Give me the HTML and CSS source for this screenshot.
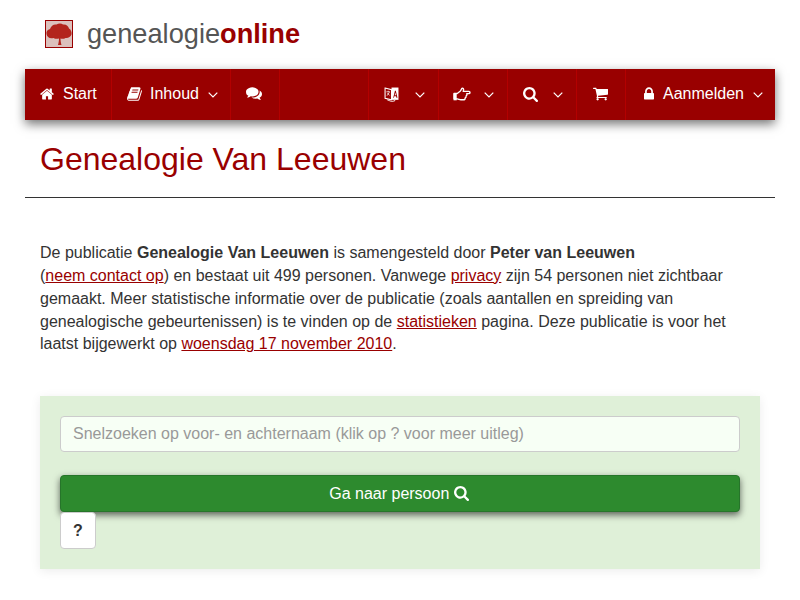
FILE: index.html
```html
<!DOCTYPE html>
<html lang="nl">
<head>
<meta charset="utf-8">
<title>Genealogie Van Leeuwen</title>
<link rel="stylesheet" href="styles.css">
</head>
<body>
<div class="page">
  <header class="brand">
    <span class="brand-mark">
      <svg class="brand-icon" viewBox="0 0 26 26" aria-hidden="true">
        <path d="M.5 13C0 10.500 1.500 8.500 4 8 5 5 7.500 3 10.500 3.500c2-1.500 5-1.500 6.500 0 3-.5 5.500 1.500 6 4 2 1 3 4 2.500 6-1 2.500-3.500 4-6 3.500-1.500 1-3.500 1-5 .5 0 2 .3 4 1 6.500h-3.500c.7-2.500 1-4.500 1-6.500-1.500.5-4 .5-5.500-.5C3.500 18 1 16 .5 13z" fill="#b3241c"/>
      </svg>
    </span>
    <span class="brand-name">genealogie<b>online</b></span>
  </header>
  <nav class="nav">
    <a class="item i-start"><svg class="ic" viewBox="0 0 1664 1792"><path d="M1408 992v480q0 26-19 45t-45 19H960v-384H704v384H320q-26 0-45-19t-19-45V992q0-1 .5-3t.5-3l575-474 575 474q1 2 1 6zm223-69l-62 74q-8 9-21 11h-3q-13 0-21-7L832 424 140 1001q-12 8-24 7-13-2-21-11l-62-74q-8-10-7-23.5T37 878L756 279q32-26 76-26t76 26l244 204V288q0-14 9-23t23-9h192q14 0 23 9t9 23v408l219 182q10 8 11 21.5t-7 23.5z"/></svg>Start</a>
    <a class="item i-inhoud"><svg class="ic" viewBox="0 0 1664 1792"><path d="M1639 478q40 57 18 129l-275 906q-19 64-76.5 107.5T1183 1664H260q-77 0-148.5-53.5T12 1479q-24-67-2-127 0-4 3-27t4-37q1-8-3-21.5t-3-19.5q2-11 8-21t16.5-23.5T52 1179q23-38 45-91.5t30-91.5q3-10 .5-30t-.5-28q3-11 17-28t17-23q21-36 42-92t25-90q1-9-2.5-32t.5-28q4-13 22-30.5t22-22.5q19-26 42.5-84.5T339 418q1-8-3-25.5t-2-26.5q2-8 9-18t18-23 17-21q8-12 16.5-30.5t15-35 16-36 19.5-32T472 146t36-11.5T555 140l-1 3q38-9 51-9h761q74 0 114 56t18 130l-274 906q-36 119-71.5 153.5T1024 1414H155q-27 0-38 15-11 16-1 43 24 70 144 70h923q29 0 56-15.5t35-41.5l300-987q7-22 5-57 38 15 59 43zm-1064 2q-4 13 2 22.5t20 9.5h608q13 0 25.5-9.5T1247 480l21-64q4-13-2-22.5t-20-9.5H638q-13 0-25.5 9.5T596 416zm-83 256q-4 13 2 22.5t20 9.5h608q13 0 25.5-9.5T1164 736l21-64q4-13-2-22.5t-20-9.5H555q-13 0-25.5 9.5T513 672z"/></svg>Inhoud<svg class="chev" viewBox="0 0 10 6"><path d="M.7.7 5 5 9.3.7"/></svg></a>
    <a class="item i-chat"><svg class="ic" viewBox="0 0 1792 1792"><path d="M1408 768q0 139-94 257t-256.5 186.5T704 1280q-86 0-176-16-124 88-278 128-36 9-86 16h-3q-11 0-20.5-8t-11.5-21q-1-3-1-6.5t.5-6.5 2-6l2.5-5 3.5-5.5 4-5 4.5-5 4-4.5q5-6 23-25t26-29.5 22.5-29 25-38.5 20.5-44Q142 1165 71 1060T0 768q0-139 94-257t256.5-186.5T704 256t353.5 68.5T1314 511t94 257zm384 256q0 120-71 224.5T1526 1425q10 24 20.5 44t25 38.5 22.5 29 26 29.5 23 25q1 1 4 4.5t4.5 5 4 5 3.5 5.5l2.5 5 2 6 .5 6.5-1 6.5q-3 14-13 22t-22 7q-50-7-86-16-154-40-278-128-90 16-176 16-271 0-472-132 58 4 88 4 161 0 309-45t264-129q125-92 192-212t67-254q0-77-23-152 129 71 204 178t75 230z"/></svg></a>
    <span class="spacer"></span>
    <a class="item i-lang"><svg class="ic-lang" viewBox="0 1 14 15"><path d="M1 2.500 7 4v9.500L1 12z" fill="none" stroke="#fff" stroke-width="1"/><path d="M7 2h6.500v11.500H7z"/><path d="M8.600 11.500 10.200 5h.8l1.600 6.500h-1l-.3-1.300h-1.700l-.3 1.300zM10 9.300h1.200l-.6-2.600z" fill="#990000"/><path d="M2.200 6h3.400M3.900 5v1M2.800 9.600 5 6.400M3.200 7.200l2 2.200" stroke="#fff" stroke-width=".7" fill="none"/><path d="M3 13.500l4 1.500 3-.5v-1" stroke="#fff" stroke-width=".8" fill="none"/></svg><svg class="chev" viewBox="0 0 10 6"><path d="M.7.7 5 5 9.3.7"/></svg></a>
    <a class="item i-hand"><svg class="ic-hand" viewBox="0 0 17 14"><path d="M1 6h3l3-2.300 1.400-2.500c1.200-.4 1.900.5 1.500 2L9.600 4H15c1.400 0 1.400 2.200 0 2.200h-2c.4 1 0 1.900-.6 2.100.2 1-.3 1.700-.9 1.900 0 1.200-.7 1.800-1.800 1.800H7.400c-1.200 0-2-.7-3.400-.9H1z" fill="none" stroke="#fff" stroke-width="1.300" stroke-linejoin="round"/><path d="M.5 6h3v6.500h-3z"/></svg><svg class="chev" viewBox="0 0 10 6"><path d="M.7.7 5 5 9.3.7"/></svg></a>
    <a class="item i-search"><svg class="ic" viewBox="0 0 1664 1664"><path d="M1152 704q0-185-131.500-316.500T704 256 387.500 387.500 256 704t131.500 316.500T704 1152t316.500-131.500T1152 704zm512 832q0 52-38 90t-90 38q-54 0-90-38l-343-342q-179 124-399 124-143 0-273.500-55.500t-225-150-150-225T0 704t55.500-273.500 150-225 225-150T704 0t273.500 55.500 225 150 150 225T1408 704q0 220-124 399l343 343q37 37 37 90z"/></svg><svg class="chev" viewBox="0 0 10 6"><path d="M.7.7 5 5 9.3.7"/></svg></a>
    <a class="item i-cart"><svg class="ic" viewBox="0 0 1664 1792"><path d="M640 1536q0 52-38 90t-90 38-90-38-38-90 38-90 90-38 90 38 38 90zm896 0q0 52-38 90t-90 38-90-38-38-90 38-90 90-38 90 38 38 90zm128-1088v512q0 24-16.500 42.500T1607 1024L563 1146q13 60 13 70 0 16-24 64h920q26 0 45 19t19 45-19 45-45 19H448q-26 0-45-19t-19-45q0-11 8-31.500t16-36 21.500-40T445 1207L268 384H64q-26 0-45-19T0 320t19-45 45-19h256q16 0 28.500 6.500T368 278t13 24.500 8 26 5.500 29.500 4.500 26h1201q26 0 45 19t19 45z"/></svg></a>
    <a class="item i-login"><svg class="ic-lock" viewBox="0 0 1152 1792"><path d="M320 768h512V576q0-106-75-181t-181-75-181 75-75 181v192zm832 96v576q0 40-28 68t-68 28H96q-40 0-68-28t-28-68V864q0-40 28-68t68-28h32V576q0-184 132-316t316-132 316 132 132 316v192h32q40 0 68 28t28 68z"/></svg>Aanmelden<svg class="chev" viewBox="0 0 10 6"><path d="M.7.7 5 5 9.3.7"/></svg></a>
  </nav>
  <h1 class="title">Genealogie Van Leeuwen</h1>
  <main class="content">
    <p class="intro">De publicatie <b>Genealogie Van Leeuwen</b> is samengesteld door <b>Peter van Leeuwen</b><br>(<a href="#">neem contact op</a>) en bestaat uit 499 personen. Vanwege <a href="#">privacy</a> zijn 54 personen niet zichtbaar gemaakt. Meer statistische informatie over de publicatie (zoals aantallen en spreiding van genealogische gebeurtenissen) is te vinden op de <a href="#">statistieken</a> pagina. Deze publicatie is voor het laatst bijgewerkt op <a href="#">woensdag 17 november 2010</a>.</p>
    <form class="panel">
      <input class="search" type="text" placeholder="Snelzoeken op voor- en achternaam (klik op ? voor meer uitleg)">
      <button class="go" type="button">Ga naar persoon <svg class="go-ic" viewBox="0 0 1664 1664"><path d="M1152 704q0-185-131.500-316.500T704 256 387.500 387.500 256 704t131.500 316.500T704 1152t316.500-131.500T1152 704zm512 832q0 52-38 90t-90 38q-54 0-90-38l-343-342q-179 124-399 124-143 0-273.500-55.500t-225-150-150-225T0 704t55.500-273.500 150-225 225-150T704 0t273.500 55.500 225 150 150 225T1408 704q0 220-124 399l343 343q37 37 37 90z"/></svg></button>
      <button class="help" type="button">?</button>
    </form>
  </main>
</div>
</body>
</html>
```
FILE: styles.css
```css
* { box-sizing: border-box; }
html, body { margin: 0; background: #fff; }
body {
  font-family: "Liberation Sans", Arial, sans-serif;
  font-size: 16px;
  line-height: 1.42857;
  color: #333;
  overflow: hidden;
}
.page { padding: 0 25px; height: 600px; }
.brand {
  height: 69px;
  display: flex;
  align-items: center;
  padding: 0 0 2px 20px;
  gap: 14px;
}
.brand-mark {
  display: block;
  width: 28px;
  height: 28px;
  background: #dcc0bc;
  border: 1px solid #990000;
}
.brand-icon { display: block; width: 26px; height: 26px; filter: blur(.4px); }
.brand-name { font-size: 27.2px; line-height: 32px; color: #555; }
.brand-name b { color: #990000; }
.nav {
  height: 51px;
  display: flex;
  background: #990000;
  color: #fff;
  box-shadow: 0 4px 10px rgba(0, 0, 0, .55);
}
.item {
  display: flex;
  align-items: center;
  white-space: nowrap;
  flex: none;
}
.spacer { flex: 1; }
.i-start, .i-inhoud, .i-chat { padding-left: 15px; border-right: 1px solid #b30000; }
.i-lang, .i-hand, .i-search, .i-cart, .i-login { border-left: 1px solid #b30000; }
.nav svg { fill: #fff; flex: none; }
.ic { width: 14px; height: 16px; margin: 0 9px 2px 0; }
.i-start { width: 87px; }
.i-inhoud { width: 119px; }
.i-chat { width: 49px; }
.i-lang { width: 70px; padding-left: 15px; }
.i-hand { width: 69px; padding-left: 14px; }
.i-search { width: 69px; padding-left: 15px; }
.i-cart { width: 49px; padding-left: 16px; }
.i-login { width: 150px; padding-left: 18px; }
.i-inhoud .ic { width: 15px; margin-right: 8px; }
.i-chat .ic { width: 16px; margin-bottom: 3px; }
.i-search .ic { width: 15px; height: 15px; margin: 0 15px 1px 0; }
.i-cart .ic { width: 15px; height: 17px; margin-bottom: 3px; }
.ic-lang { width: 15px; height: 17px; margin: 0 16px 1px 0; }
.ic-hand { width: 18px; height: 15px; margin: 0 13px 1px 0; }
.ic-lock { width: 10px; height: 16px; margin: 0 9px 2px 0; }
.chev { width: 10px; height: 6px; margin-left: 9px; }
.ic-lang + .chev, .ic-hand + .chev, .i-search .chev { margin-left: 0; }
.nav .chev { fill: none; stroke: #fff; stroke-width: 1.2; }
.title {
  margin: 0;
  height: 78px;
  padding: 19px 15px 0;
  border-bottom: 1px solid #333;
  font-size: 32px;
  line-height: 40px;
  font-weight: 400;
  color: #990000;
}
.content { padding: 44px 15px 0; }
.intro { margin: 0 0 40px; }
.intro a { color: #990000; text-decoration: underline; }
.panel {
  background: #dff0d8;
  height: 173px;
  padding: 20px;
  box-shadow: 0 2px 10px rgba(0, 0, 0, .08);
}
.search {
  display: block;
  width: 100%;
  height: 36px;
  padding: 6px 12px;
  background: #f7fff5;
  border: 1px solid #ccc;
  border-radius: 4px;
  font: 16px "Liberation Sans", Arial, sans-serif;
  color: #555;
  margin-bottom: 23px;
}
.search::placeholder { color: #999; opacity: 1; }
.go {
  display: block;
  width: 100%;
  height: 37px;
  padding: 0 16px 0 14px;
  background: #2d8a2e;
  border: 1px solid #26752a;
  border-radius: 4px;
  box-shadow: 0 3px 7px rgba(0, 0, 0, .6);
  color: #fff;
  font: 16px "Liberation Sans", Arial, sans-serif;
}
.go-ic { width: 15px; height: 15px; fill: #fff; vertical-align: -2px; }
.help {
  display: block;
  width: 36px;
  height: 37px;
  background: #fff;
  border: 1px solid #ccc;
  border-radius: 4px;
  color: #333;
  font: bold 16px "Liberation Sans", Arial, sans-serif;
  padding: 0;
}
```
